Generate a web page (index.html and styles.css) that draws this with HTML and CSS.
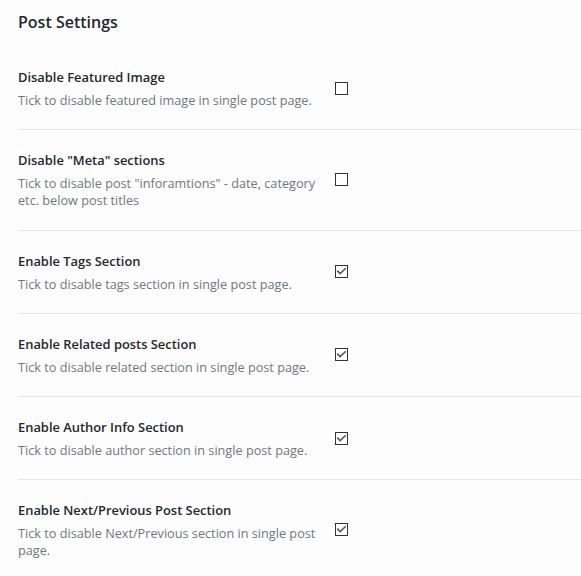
FILE: index.html
```html
<!DOCTYPE html>
<html>
<head>
<meta charset="utf-8">
<link rel="stylesheet" href="styles.css">
</head>
<body>
<div class="panel">
  <h2 class="panel-title">Post Settings</h2>
  <div class="settings">
    <div class="row">
      <div class="text">
        <div class="label">Disable Featured Image</div>
        <div class="desc">Tick to disable featured image in single post page.</div>
      </div>
      <span class="cb"></span>
    </div>
    <div class="row">
      <div class="text">
        <div class="label">Disable "Meta" sections</div>
        <div class="desc">Tick to disable post "inforamtions" - date, category etc. below post titles</div>
      </div>
      <span class="cb"></span>
    </div>
    <div class="row">
      <div class="text">
        <div class="label">Enable Tags Section</div>
        <div class="desc">Tick to disable tags section in single post page.</div>
      </div>
      <span class="cb checked"><svg viewBox="0 0 13 13" width="13" height="13"><path d="M2.2 5.6 L5.2 8.6 L10.8 3.2" /></svg></span>
    </div>
    <div class="row">
      <div class="text">
        <div class="label">Enable Related posts Section</div>
        <div class="desc">Tick to disable related section in single post page.</div>
      </div>
      <span class="cb checked"><svg viewBox="0 0 13 13" width="13" height="13"><path d="M2.2 5.6 L5.2 8.6 L10.8 3.2" /></svg></span>
    </div>
    <div class="row">
      <div class="text">
        <div class="label">Enable Author Info Section</div>
        <div class="desc">Tick to disable author section in single post page.</div>
      </div>
      <span class="cb checked"><svg viewBox="0 0 13 13" width="13" height="13"><path d="M2.2 5.6 L5.2 8.6 L10.8 3.2" /></svg></span>
    </div>
    <div class="row">
      <div class="text">
        <div class="label">Enable Next/Previous Post Section</div>
        <div class="desc">Tick to disable Next/Previous section in single post page.</div>
      </div>
      <span class="cb checked"><svg viewBox="0 0 13 13" width="13" height="13"><path d="M2.2 5.6 L5.2 8.6 L10.8 3.2" /></svg></span>
    </div>
  </div>
</div>
</body>
</html>
```

FILE: styles.css
```css
html, body {
  margin: 0;
  padding: 0;
  background: #fdfdfd;
}
body {
  font-family: "Open Sans", "Noto Sans", sans-serif;
  color: #23282d;
}
.panel {
  padding-left: 18px;
}
.panel-title {
  margin: 0;
  padding-top: 10px;
  font-size: 16px;
  line-height: 24px;
  font-weight: 600;
  color: #23282d;
  margin-bottom: 13px;
}
.row {
  display: flex;
  align-items: center;
  gap: 12px;
  padding: 20px 0 20.25px;
  border-bottom: 1px solid #e6e6e6;
}
.row:last-child {
  border-bottom: none;
}
.text {
  width: 305px;
  flex: none;
}
.label {
  font-size: 12.9px;
  line-height: 20px;
  font-weight: 600;
  color: #23282d;
}
.desc {
  margin-top: 5px;
  font-size: 12.7px;
  line-height: 17px;
  color: #72777c;
}
.cb {
  box-sizing: border-box;
  width: 13px;
  height: 13px;
  border: 1px solid #333;
  background: #fff;
  flex: none;
  display: block;
  position: relative;
}
.cb svg {
  position: absolute;
  left: -1px;
  top: -1px;
  fill: none;
  stroke: #555;
  stroke-width: 1.5;
}
```
